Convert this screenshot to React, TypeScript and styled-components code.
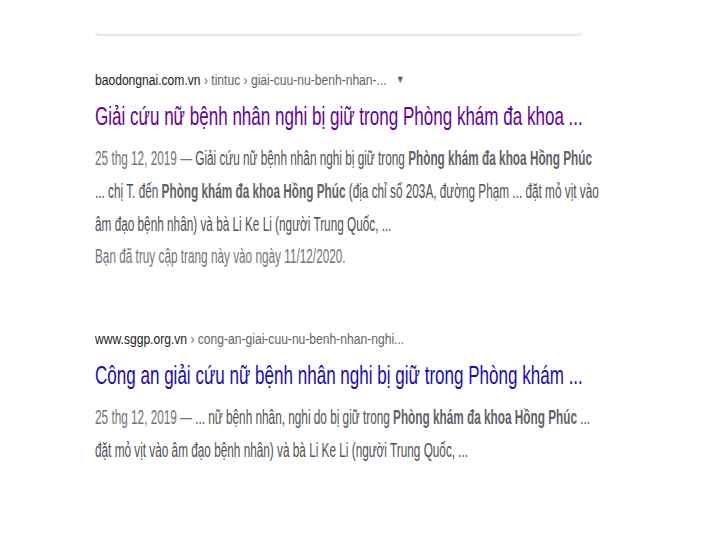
import React from 'react';
import styled, { createGlobalStyle } from 'styled-components';

const GlobalStyle = createGlobalStyle`
  html, body {
    margin: 0;
    padding: 0;
    background: #ffffff;
    overflow: hidden;
  }
  body {
    font-family: "Liberation Sans", Arial, sans-serif;
  }
`;

const Page = styled.div`
  width: 714px;
  height: 544px;
  overflow: hidden;
  background: #fff;
`;

const SearchCardEdge = styled.div`
  margin: 30px 0 0 94px;
  width: 487px;
  height: 4px;
  border: 1px solid #f0f0f4;
  border-top: none;
  border-bottom: 2px solid #e4e4ea;
  border-radius: 0 0 6px 6px;
`;

const Results = styled.div`
  margin-left: 95px;
  width: 1000px;
  padding-top: 33px;
`;

const Result = styled.div`
  & + & {
    margin-top: 56px;
  }
`;

// the screenshot is squeezed sideways, so each text row is narrowed on its own
const Cite = styled.div<{ $gap: number }>`
  font-size: 15.5px;
  line-height: 20px;
  height: 20px;
  color: #5f6368;
  white-space: nowrap;
  transform: scaleX(0.78);
  transform-origin: left center;
  margin-bottom: ${({ $gap }) => $gap}px;
`;

const Domain = styled.span`
  color: #202124;
`;

const MenuArrow = styled.span`
  display: inline-block;
  margin-left: 12px;
  font-size: 11px;
  color: #5f6368;
  vertical-align: 2px;
`;

const Title = styled.div<{ $visited?: boolean }>`
  font-size: 25.5px;
  line-height: 32px;
  color: ${({ $visited }) => ($visited ? '#660099' : '#1a0dab')};
  white-space: nowrap;
  transform: scaleX(0.668);
  transform-origin: left center;
  margin-bottom: 10px;
`;

const Snippet = styled.div`
  font-size: 20px;
  line-height: 32.8px;
  color: #4d5156;
  transform: scaleX(0.589);
  transform-origin: left top;
`;

const Line = styled.div`
  white-space: nowrap;
`;

const Date = styled.span`
  color: #70757a;
`;

const Em = styled.b`
  font-weight: bold;
  color: #5f6368;
`;

const Visited = styled.div`
  white-space: nowrap;
  color: #70757a;
`;

export default function App() {
  return (
    <Page>
      <GlobalStyle />
      <SearchCardEdge />
      <Results>
        <Result>
          <Cite $gap={11}>
            <Domain>baodongnai.com.vn</Domain> › tintuc › giai-cuu-nu-benh-nhan-...
            <MenuArrow>▼</MenuArrow>
          </Cite>
          <Title $visited>Giải cứu nữ bệnh nhân nghi bị giữ trong Phòng khám đa khoa ...</Title>
          <Snippet>
            <Line>
              <Date>25 thg 12, 2019 — </Date>Giải cứu nữ bệnh nhân nghi bị giữ trong{' '}
              <Em>Phòng khám đa khoa Hồng Phúc</Em>
            </Line>
            <Line>
              ... chị T. đến <Em>Phòng khám đa khoa Hồng Phúc</Em> (địa chỉ số 203A, đường Phạm ... đặt mỏ vịt vào
            </Line>
            <Line>âm đạo bệnh nhân) và bà Li Ke Li (người Trung Quốc, ...</Line>
            <Visited>Bạn đã truy cập trang này vào ngày 11/12/2020.</Visited>
          </Snippet>
        </Result>
        <Result>
          <Cite $gap={10}>
            <Domain>www.sggp.org.vn</Domain> › cong-an-giai-cuu-nu-benh-nhan-nghi...
          </Cite>
          <Title>Công an giải cứu nữ bệnh nhân nghi bị giữ trong Phòng khám ...</Title>
          <Snippet>
            <Line>
              <Date>25 thg 12, 2019 — </Date>... nữ bệnh nhân, nghi do bị giữ trong{' '}
              <Em>Phòng khám đa khoa Hồng Phúc</Em> ...
            </Line>
            <Line>đặt mỏ vịt vào âm đạo bệnh nhân) và bà Li Ke Li (người Trung Quốc, ...</Line>
          </Snippet>
        </Result>
      </Results>
    </Page>
  );
}
